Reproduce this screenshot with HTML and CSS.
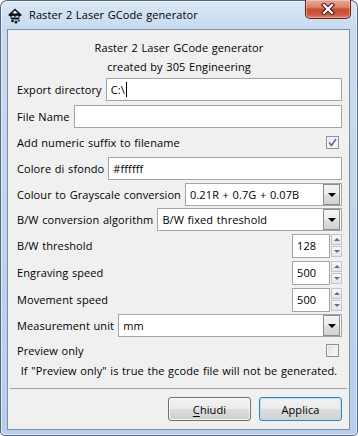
FILE: index.html
```html
<!DOCTYPE html>
<html lang="en">
<head>
    <meta charset="UTF-8">
    <title>Raster 2 Laser GCode generator</title>
    <link rel="stylesheet" href="styles.css">
</head>
<body>
    <div class="window">
        <div class="titlebar">
            <svg class="app-icon" width="16" height="16" viewBox="0 0 16 16">
                <path d="M8 0.5 L15 7 L12 9 L10 7.5 L8 9 L6 7.5 L4 9 L1 7 Z" fill="#111"/>
                <path d="M8 2.5 L11 5.5 L9.2 5 L8 6 L6.8 5 L5 5.5 Z" fill="#fff"/>
                <path d="M3 9.5 L13 9.5 L11.5 11.5 L4.5 11.5 Z" fill="#111"/>
                <circle cx="5.5" cy="13" r="1.3" fill="#111"/>
                <circle cx="9" cy="14" r="1.5" fill="#111"/>
                <circle cx="12" cy="12.5" r="0.9" fill="#111"/>
            </svg>
            <span class="title">Raster 2 Laser GCode generator</span>
            <div class="close-btn">
                <svg width="14" height="12" viewBox="0 0 14 12">
                    <path d="M3 2 L11 10 M11 2 L3 10" stroke="#3a1a14" stroke-width="4.2" stroke-linecap="square"/>
                    <path d="M3 2 L11 10 M11 2 L3 10" stroke="#fff" stroke-width="2.2" stroke-linecap="square"/>
                </svg>
            </div>
        </div>

        <div class="client">
            <div class="form">
                <div class="intro">
                    <div>Raster 2 Laser GCode generator</div>
                    <div>created by 305 Engineering</div>
                </div>

                <!-- Text fields -->
                <div class="row">
                    <span class="label">Export directory</span>
                    <div class="field">C:\<span class="caret"></span></div>
                </div>
                <div class="row row-file">
                    <span class="label">File Name</span>
                    <div class="field"></div>
                </div>
                <div class="row">
                    <span class="label">Add numeric suffix to filename</span>
                    <span class="checkbox checked">
                        <svg width="9" height="9" viewBox="0 0 9 9"><path d="M1 4.5 L3.5 7.5 L8 1" fill="none" stroke="#5a6f9c" stroke-width="1.6"/></svg>
                    </span>
                </div>
                <div class="row">
                    <span class="label">Colore di sfondo</span>
                    <div class="field">#ffffff</div>
                </div>

                <!-- Combos -->
                <div class="row">
                    <span class="label">Colour to Grayscale conversion</span>
                    <div class="field combo">
                        <span class="combo-text">0.21R + 0.7G + 0.07B</span>
                        <span class="combo-btn"><span class="arrow-down"></span></span>
                    </div>
                </div>
                <div class="row row-bw">
                    <span class="label">B/W conversion algorithm</span>
                    <div class="field combo">
                        <span class="combo-text">B/W fixed threshold</span>
                        <span class="combo-btn"><span class="arrow-down"></span></span>
                    </div>
                </div>

                <!-- Spin boxes -->
                <div class="row">
                    <span class="label">B/W threshold</span>
                    <div class="spin">
                        <div class="spin-box">128</div>
                        <div class="spin-arrows">
                            <span class="spin-btn"><span class="tri-up"></span></span>
                            <span class="spin-btn"><span class="tri-down"></span></span>
                        </div>
                    </div>
                </div>
                <div class="row row-spin">
                    <span class="label">Engraving speed</span>
                    <div class="spin">
                        <div class="spin-box">500</div>
                        <div class="spin-arrows">
                            <span class="spin-btn"><span class="tri-up"></span></span>
                            <span class="spin-btn"><span class="tri-down"></span></span>
                        </div>
                    </div>
                </div>
                <div class="row row-spin">
                    <span class="label">Movement speed</span>
                    <div class="spin">
                        <div class="spin-box">500</div>
                        <div class="spin-arrows">
                            <span class="spin-btn"><span class="tri-up"></span></span>
                            <span class="spin-btn"><span class="tri-down"></span></span>
                        </div>
                    </div>
                </div>

                <div class="row">
                    <span class="label">Measurement unit</span>
                    <div class="field combo">
                        <span class="combo-text">mm</span>
                        <span class="combo-btn"><span class="arrow-down"></span></span>
                    </div>
                </div>
                <div class="row row-check">
                    <span class="label">Preview only</span>
                    <span class="checkbox"></span>
                </div>
                <div class="note">If "Preview only" is true the gcode file will not be generated.</div>
            </div>

            <div class="separator"></div>

            <div class="buttons">
                <button class="btn"><u>C</u>hiudi</button>
                <button class="btn btn-default">Applica</button>
            </div>
        </div>
    </div>
</body>
</html>
```

FILE: styles.css
```css
:root {
    --client-bg: #f0f0f0;
    --field-border: #a5a5a5;
    --text: #000000;
}

body {
    margin: 0;
    font-family: 'Open Sans', 'Liberation Sans', sans-serif;
    font-size: 11px;
    letter-spacing: 0.1px;
    word-spacing: 0.6px;
    color: var(--text);
    background: #ffffff;
}

.window {
    width: 358px;
    height: 436px;
    box-sizing: border-box;
    display: flex;
    flex-direction: column;
    padding: 0 8px 6px 7px;
    border-radius: 7px 7px 5px 5px;
    background: linear-gradient(to bottom, #dae7f5 0, #c9dbf0 28px, #bcd3ee 60%, #b6cfec 100%);
    box-shadow: inset 0 0 0 1px #55687e, inset 0 0 0 2px rgba(255, 255, 255, 0.55);
}

/* Title bar */
.titlebar {
    height: 29px;
    display: flex;
    align-items: flex-start;
    flex-shrink: 0;
}

.app-icon {
    margin-top: 8px;
}

.title {
    margin-left: 6px;
    margin-top: 7px;
    font-size: 11px;
    line-height: 16px;
}

.close-btn {
    margin-left: auto;
    margin-right: -1px;
    width: 44px;
    height: 18px;
    display: flex;
    align-items: center;
    justify-content: center;
    border: 1px solid #5e2219;
    border-top: none;
    border-radius: 0 0 5px 5px;
    background: linear-gradient(to bottom, #e9a99b 0, #dc8069 40%, #c74a32 52%, #cf5a40 80%, #e2806a 100%);
    box-shadow: inset 0 0 0 1px rgba(255, 220, 210, 0.45);
}

/* Client area */
.client {
    flex: 1;
    display: flex;
    flex-direction: column;
    background: var(--client-bg);
    border: 1px solid #7d8fa6;
}

.form {
    display: flex;
    flex-direction: column;
    gap: 3px;
    padding: 8px 7px 0 8px;
}

.intro {
    text-align: center;
    line-height: 19px;
    margin-bottom: -1px;
}

.row {
    height: 23px;
    display: flex;
    align-items: center;
    gap: 4px;
}

.row-file {
    margin-top: 1px;
}

.row-bw {
    margin-top: -1px;
}

.row-spin {
    margin-top: 1px;
}

.row-check {
    height: 21px;
}

.label {
    white-space: nowrap;
    padding-left: 1px;
}

.field {
    flex: 1;
    height: 23px;
    box-sizing: border-box;
    display: flex;
    align-items: center;
    padding-left: 4px;
    background: #ffffff;
    border: 1px solid var(--field-border);
}

.caret {
    display: inline-block;
    width: 1px;
    height: 15px;
    margin-left: 1px;
    background: #000000;
}

/* Combo box */
.combo {
    padding-right: 1px;
}

.combo-text {
    flex: 1;
}

.combo-btn {
    width: 15px;
    height: 19px;
    display: flex;
    align-items: center;
    justify-content: center;
    border: 1px solid #8d8d8d;
    background: linear-gradient(to bottom, #f4f4f4 0, #ececec 50%, #dedede 51%, #d2d2d2 100%);
}

.arrow-down {
    width: 0;
    height: 0;
    border-left: 4px solid transparent;
    border-right: 4px solid transparent;
    border-top: 4px solid #000000;
    margin-top: 1px;
}

/* Checkbox */
.checkbox {
    margin-left: auto;
    margin-right: 3px;
    width: 13px;
    height: 13px;
    box-sizing: border-box;
    display: flex;
    align-items: center;
    justify-content: center;
    border: 1px solid #8f8f8f;
    background: linear-gradient(135deg, #dcdcdc 0, #f0f0f0 60%, #fbfbfb 100%);
    box-shadow: inset 0 0 0 1px #f4f4f4;
}

.checkbox.checked {
    background: linear-gradient(135deg, #e4e6ec 0, #f4f5f8 70%);
}

/* Spin box */
.spin {
    margin-left: auto;
    display: flex;
    align-items: center;
    height: 24px;
}

.spin-box {
    width: 38px;
    height: 24px;
    box-sizing: border-box;
    padding-left: 4px;
    display: flex;
    align-items: center;
    background: #ffffff;
    border: 1px solid var(--field-border);
}

.spin-arrows {
    display: flex;
    flex-direction: column;
    gap: 1px;
    margin-left: 1px;
    width: 11px;
}

.spin-btn {
    height: 11px;
    box-sizing: border-box;
    display: flex;
    align-items: center;
    justify-content: center;
    border: 1px solid #c5c5c5;
    background: linear-gradient(to bottom, #f7f7f7, #e6e6e6);
}

.tri-up, .tri-down {
    width: 0;
    height: 0;
    border-left: 3px solid transparent;
    border-right: 3px solid transparent;
}

.tri-up {
    border-bottom: 3px solid #5d6f95;
}

.tri-down {
    border-top: 3px solid #5d6f95;
}

.note {
    margin-top: -3px;
    line-height: 20px;
    text-align: center;
}

.separator {
    margin: 7px 2px 0;
    height: 1px;
    background: #a0a0a0;
}

/* Buttons */
.buttons {
    display: flex;
    justify-content: flex-end;
    gap: 8px;
    padding: 8px 7px 0 0;
}

.btn {
    width: 83px;
    height: 24px;
    font-family: inherit;
    font-size: 11px;
    letter-spacing: inherit;
    color: #000000;
    border: 1px solid #707070;
    border-radius: 3px;
    background: linear-gradient(to bottom, #f2f2f2 0, #ebebeb 50%, #dddddd 51%, #cfcfcf 100%);
    box-shadow: inset 0 0 0 1px rgba(255, 255, 255, 0.7);
    padding: 0;
}

.btn u {
    text-decoration-thickness: 1px;
    text-underline-offset: 2px;
}

.btn-default {
    border-color: #3c7fb1;
    box-shadow: inset 0 0 0 1px #b6e2f9;
}
```
